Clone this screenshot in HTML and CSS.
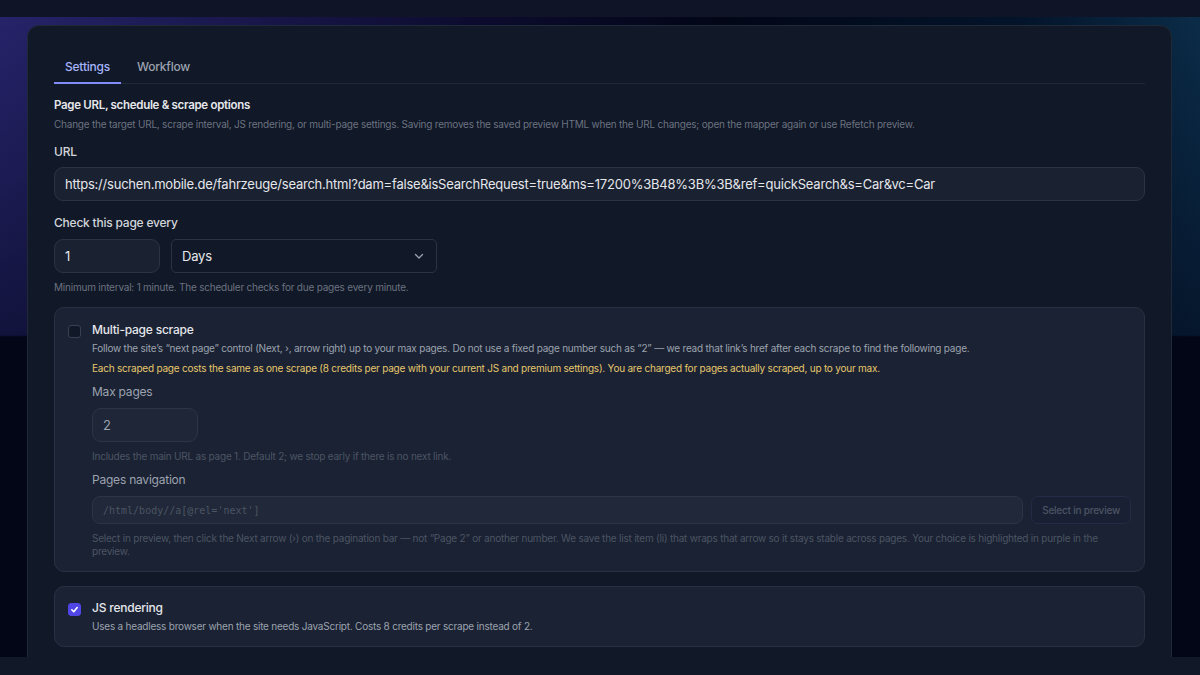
FILE: index.html
```html
<!DOCTYPE html>
<html>

<head>
    <meta charset="UTF-8">
    <title>Page settings</title>
    <link rel="stylesheet" href="styles.css">
</head>

<body>
    <div class="topbar"></div>
    <div class="stage">
        <div class="card">
            <div class="tabs">
                <div class="tab active">Settings</div>
                <div class="tab">Workflow</div>
            </div>

            <h2 class="section-title">Page URL, schedule &amp; scrape options</h2>
            <p class="section-desc">Change the target URL, scrape interval, JS rendering, or multi-page settings. Saving removes the saved preview HTML when the URL changes; open the mapper again or use Refetch preview.</p>

            <label class="field-label">URL</label>
            <div class="input url-input">https://suchen.mobile.de/fahrzeuge/search.html?dam=false&amp;isSearchRequest=true&amp;ms=17200%3B48%3B%3B&amp;ref=quickSearch&amp;s=Car&amp;vc=Car</div>

            <label class="field-label">Check this page every</label>
            <div class="interval-row">
                <div class="input number-input">1</div>
                <div class="select">
                    <span>Days</span>
                    <svg width="12" height="12" viewBox="0 0 12 12">
                        <polyline points="2.5,4.5 6,8 9.5,4.5" fill="none" stroke="#9ca3af" stroke-width="1.3" stroke-linecap="round" stroke-linejoin="round" />
                    </svg>
                </div>
            </div>
            <p class="hint">Minimum interval: 1 minute. The scheduler checks for due pages every minute.</p>

            <div class="option-box">
                <div class="checkbox"></div>
                <div class="option-body">
                    <div class="option-title">Multi-page scrape</div>
                    <p class="option-desc">Follow the site’s “next page” control (Next, ›, arrow right) up to your max pages. Do not use a fixed page number such as “2” — we read that link’s href after each scrape to find the following page.</p>
                    <p class="option-warn">Each scraped page costs the same as one scrape (8 credits per page with your current JS and premium settings). You are charged for pages actually scraped, up to your max.</p>

                    <label class="sub-label">Max pages</label>
                    <div class="input number-input dim">2</div>
                    <p class="hint dim-hint">Includes the main URL as page 1. Default 2; we stop early if there is no next link.</p>

                    <label class="sub-label">Pages navigation</label>
                    <div class="xpath-row">
                        <div class="xpath-input">/html/body//a[@rel='next']</div>
                        <div class="btn-ghost">Select in preview</div>
                    </div>
                    <p class="hint dim-hint wrap-hint">Select in preview, then click the Next arrow (›) on the pagination bar — not “Page 2” or another number. We save the list item (li) that wraps that arrow so it stays stable across pages. Your choice is highlighted in purple in the preview.</p>
                </div>
            </div>

            <div class="option-box js-box">
                <div class="checkbox checked">
                    <svg width="9" height="9" viewBox="0 0 10 10">
                        <polyline points="2,5.3 4.2,7.4 8,2.8" fill="none" stroke="#fff" stroke-width="1.8" stroke-linecap="round" stroke-linejoin="round" />
                    </svg>
                </div>
                <div class="option-body">
                    <div class="option-title">JS rendering</div>
                    <p class="option-desc">Uses a headless browser when the site needs JavaScript. Costs 8 credits per scrape instead of 2.</p>
                </div>
            </div>
        </div>
    </div>
</body>

</html>
```

FILE: styles.css
```css
body {
    margin: 0;
    background-color: #111827;
    font-family: Inter, "Noto Sans", sans-serif;
    letter-spacing: -0.22px;
    color: #e5e7eb;
    overflow: hidden;
}

.topbar {
    height: 17px;
    background-color: #0f1526;
}

.stage {
    height: 640px;
    padding-top: 8px;
    box-sizing: border-box;
    background:
        linear-gradient(180deg, rgba(2, 6, 23, 0) 0, rgba(2, 6, 23, 0.55) 318px, #020617 320px),
        linear-gradient(90deg, #26236a 0%, #0c0b2e 40%, #020617 60%, #03142a 85%, #0b2c48 100%);
}

.card {
    width: 1145px;
    height: 700px;
    margin-left: 27px;
    box-sizing: border-box;
    padding: 25px 26px 0;
    background-color: #111827;
    border: 1px solid #1f2937;
    border-radius: 12px;
}

.tabs {
    display: flex;
    border-bottom: 1px solid #1f2937;
}

.tab {
    padding: 9px 11px;
    font-size: 12px;
    line-height: 14px;
    font-weight: 500;
    color: #9ca3af;
    margin-right: 5px;
}

.tab.active {
    color: #a5b4fc;
    border-bottom: 2px solid #818cf8;
    margin-bottom: -1px;
    padding-bottom: 8px;
}

.section-title {
    margin: 14px 0 0;
    font-size: 11.5px;
    line-height: 14px;
    font-weight: 600;
    letter-spacing: -0.3px;
    color: #e5e7eb;
}

.section-desc {
    margin: 5px 0 0;
    font-size: 10px;
    line-height: 14px;
    color: #6b7280;
}

.field-label {
    display: block;
    margin-top: 13px;
    font-size: 12px;
    line-height: 16px;
    font-weight: 500;
    color: #d1d5db;
}

.input {
    box-sizing: border-box;
    height: 34px;
    margin-top: 7px;
    padding: 0 10px;
    display: flex;
    align-items: center;
    font-size: 13px;
    color: #e5e7eb;
    background-color: #1a2131;
    border: 1px solid #2b3445;
    border-radius: 9px;
    white-space: nowrap;
}

.url-input + .field-label {
    margin-top: 14px;
}

.interval-row {
    display: flex;
    gap: 11px;
    margin-top: 8px;
}

.interval-row .input {
    margin-top: 0;
}

.number-input {
    width: 106px;
}

.select {
    box-sizing: border-box;
    width: 266px;
    height: 34px;
    padding: 0 11px 0 10px;
    display: flex;
    align-items: center;
    justify-content: space-between;
    font-size: 13px;
    color: #e5e7eb;
    border: 1px solid #2b3445;
    border-radius: 5px;
}

.hint {
    margin: 7px 0 0;
    font-size: 10px;
    line-height: 14px;
    color: #6b7280;
}

.option-box {
    display: flex;
    gap: 11px;
    margin-top: 13px;
    padding: 14px 13px 13px;
    background-color: #1b2233;
    border: 1px solid #283143;
    border-radius: 10px;
}

.js-box {
    margin-top: 14px;
    padding-top: 13px;
}

.checkbox {
    flex: none;
    width: 13px;
    height: 13px;
    margin-top: 3px;
    box-sizing: border-box;
    background-color: #111827;
    border: 1px solid #374151;
    border-radius: 3px;
    display: flex;
    align-items: center;
    justify-content: center;
}

.checkbox.checked {
    background-color: #4f46e5;
    border-color: #4f46e5;
}

.option-body {
    flex: 1;
}

.option-title {
    font-size: 12px;
    line-height: 16px;
    font-weight: 500;
    color: #e5e7eb;
}

.option-desc {
    margin: 3px 0 0;
    font-size: 10px;
    line-height: 14px;
    color: #9ca3af;
}

.option-warn {
    margin: 6px 0 0;
    font-size: 10px;
    line-height: 14px;
    color: #e6c76c;
}

.sub-label {
    display: block;
    margin-top: 9px;
    font-size: 12px;
    line-height: 16px;
    color: #9ca3af;
}

.input.dim {
    width: 106px;
    margin-top: 8px;
    color: #9ca3af;
    background-color: #1f2637;
    border-color: #2c3446;
}

.dim-hint {
    color: #4b5563;
}

.xpath-row {
    display: flex;
    gap: 8px;
    margin-top: 8px;
}

.xpath-input {
    flex: 1;
    box-sizing: border-box;
    height: 28px;
    padding: 0 10px;
    display: flex;
    align-items: center;
    font-family: "DejaVu Sans Mono", "Liberation Mono", monospace;
    font-size: 10px;
    letter-spacing: 0;
    color: #4b5563;
    background-color: #212839;
    border: 1px solid #2c3446;
    border-radius: 8px;
}

.btn-ghost {
    box-sizing: border-box;
    height: 28px;
    padding: 0 10px;
    display: flex;
    align-items: center;
    font-size: 10px;
    font-weight: 500;
    color: #4b5563;
    background-color: #1a2034;
    border: 1px solid #232b46;
    border-radius: 7px;
}

.wrap-hint {
    margin-top: 8px;
    line-height: 13px;
    padding-right: 14px;
}
```
